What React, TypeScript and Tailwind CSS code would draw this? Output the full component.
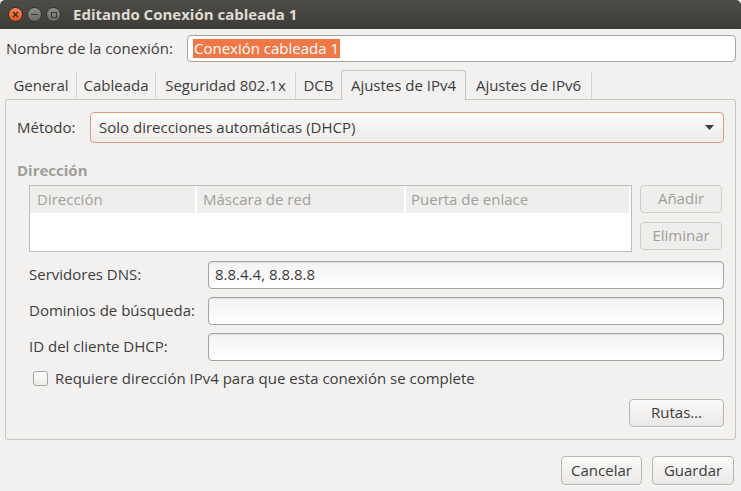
import React from 'react';

const font = { fontFamily: '"Open Sans", "Noto Sans", sans-serif' };

const tabs = [
  { label: 'General', w: 'w-[71px]' },
  { label: 'Cableada', w: 'w-[79px]' },
  { label: 'Seguridad 802.1x', w: 'w-[140px]' },
  { label: 'DCB', w: 'w-[45px]' },
  { label: 'Ajustes de IPv4', w: 'w-[125px]' },
  { label: 'Ajustes de IPv6', w: 'w-[126px]' },
];

function Entry({ value }: { value?: string }) {
  return (
    <div className="flex-1 h-[28px] rounded-[4px] border border-[#a8a49e] bg-gradient-to-b from-[#f2f2f2] to-white shadow-[inset_0_1px_1px_rgba(0,0,0,0.08)] flex items-center px-[6px] text-[#3c3c3c]">
      {value}
    </div>
  );
}

function Button({ label, disabled, className = '' }: { label: string; disabled?: boolean; className?: string }) {
  return (
    <div
      className={`h-[28px] rounded-[4px] border flex items-center justify-center ${
        disabled
          ? 'border-[#d1cdc8] bg-[#efeeec] text-[#a09e9a]'
          : 'border-[#b9b5b0] bg-gradient-to-b from-[#fafaf9] to-[#ebe9e7] text-[#3c3c3c] shadow-[0_1px_0_rgba(255,255,255,0.7)]'
      } ${className}`}
    >
      {label}
    </div>
  );
}

export default function App() {
  return (
    <div style={font} className="w-[741px] h-[491px] bg-[#f2f1f0] flex flex-col text-[15px] text-[#3c3c3c] overflow-hidden">
      {/* Title bar */}
      <div className="h-[29px] shrink-0 bg-gradient-to-b from-[#4e4c47] to-[#3d3c38] rounded-t-[5px] flex items-center pl-[8px]">
        <div className="flex items-center gap-[4px]">
          <div className="w-[15px] h-[15px] rounded-full bg-gradient-to-b from-[#f58a5b] to-[#e2521d] border border-[#3a2a22] flex items-center justify-center">
            <svg width="7" height="7" viewBox="0 0 7 7">
              <path d="M1 1 L6 6 M6 1 L1 6" stroke="#3b2418" strokeWidth="1.3" />
            </svg>
          </div>
          <div className="w-[15px] h-[15px] rounded-full bg-gradient-to-b from-[#8e8c87] to-[#6c6a66] border border-[#33322f] flex items-center justify-center">
            <div className="w-[7px] h-[1.5px] bg-[#3a3935]" />
          </div>
          <div className="w-[15px] h-[15px] rounded-full bg-gradient-to-b from-[#8e8c87] to-[#6c6a66] border border-[#33322f] flex items-center justify-center">
            <div className="w-[6px] h-[6px] border border-[#3a3935]" />
          </div>
        </div>
        <div className="ml-[12px] font-bold text-[#dfdbd2] text-[15px]">Editando Conexión cableada 1</div>
      </div>

      <div className="flex-1 flex flex-col px-[5px]">
        {/* Name row */}
        <div className="flex items-center mt-[6px] h-[27px]">
          <div className="pl-[1px] w-[182px]">Nombre de la conexión:</div>
          <div className="flex-1 h-[27px] rounded-[4px] border border-[#a8a49e] bg-white flex items-center px-[5px]">
            <span className="bg-[#f07746] text-white leading-[19px] px-[1px]">Conexión cableada 1</span>
          </div>
        </div>

        {/* Tabs */}
        <div className="flex items-end mt-[7px] h-[30px] pl-[1px]">
          {tabs.map((t, i) => {
            const active = i === 4;
            return (
              <div
                key={t.label}
                className={
                  active
                    ? `${t.w} h-[30px] flex items-center justify-center border border-b-0 border-[#c8c4bf] rounded-t-[3px] bg-[#f2f1f0] relative top-[1px]`
                    : `${t.w} h-[27px] flex items-center justify-center ${i < 3 || i === 5 ? 'border-r border-[#d6d2cd]' : ''}`
                }
              >
                {t.label}
              </div>
            );
          })}
        </div>

        {/* Panel */}
        <div className="h-[341px] border border-[#c8c4bf] rounded-[3px] flex flex-col px-[11px] pt-[12px]">
          <div className="flex items-center h-[31px]">
            <div className="w-[73px]">Método:</div>
            <div className="flex-1 h-[31px] rounded-[4px] border border-[#dc9a80] bg-gradient-to-b from-[#fbfbfa] to-[#eeecea] flex items-center pl-[8px] pr-[9px]">
              <span className="flex-1">Solo direcciones automáticas (DHCP)</span>
              <svg width="9" height="5" viewBox="0 0 9 5">
                <path d="M0 0 H9 L4.5 5 Z" fill="#3c3c3c" />
              </svg>
            </div>
          </div>

          <div className="mt-[16px] font-bold text-[#a09e9a]">Dirección</div>

          <div className="flex mt-[3px] pl-[12px] gap-[8px]">
            <div className="w-[603px] h-[67px] border border-[#c0bcb7] bg-white flex flex-col">
              <div className="h-[27px] flex bg-[#efeeec] text-[#a09e9a]">
                <div className="w-[167px] pl-[7px] flex items-center border-r-[2px] border-white">Dirección</div>
                <div className="w-[209px] pl-[6px] flex items-center border-r-[2px] border-white">Máscara de red</div>
                <div className="flex-1 pl-[5px] flex items-center border-r-[2px] border-white">Puerta de enlace</div>
              </div>
            </div>
            <div className="flex flex-col gap-[9px] w-[82px]">
              <Button label="Añadir" disabled />
              <Button label="Eliminar" disabled />
            </div>
          </div>

          <div className="flex flex-col gap-[8px] mt-[9px] pl-[12px]">
            <div className="flex items-center">
              <div className="w-[179px]">Servidores DNS:</div>
              <Entry value="8.8.4.4, 8.8.8.8" />
            </div>
            <div className="flex items-center">
              <div className="w-[179px]">Dominios de búsqueda:</div>
              <Entry />
            </div>
            <div className="flex items-center">
              <div className="w-[179px]">ID del cliente DHCP:</div>
              <Entry />
            </div>
          </div>

          <div className="flex items-center mt-[8px] pl-[16px] h-[20px]">
            <div className="w-[15px] h-[15px] rounded-[3px] border border-[#a8a49e] bg-gradient-to-b from-white to-[#eceae8]" />
            <span className="ml-[7px]">Requiere dirección IPv4 para que esta conexión se complete</span>
          </div>

          <div className="flex justify-end mt-[10px]">
            <Button label="Rutas…" className="w-[95px] h-[27px]" />
          </div>
        </div>

        {/* Footer */}
        <div className="flex justify-end gap-[10px] mt-[16px] pr-[2px]">
          <Button label="Cancelar" className="w-[81px] h-[29px]" />
          <Button label="Guardar" className="w-[82px] h-[29px]" />
        </div>
      </div>
    </div>
  );
}
